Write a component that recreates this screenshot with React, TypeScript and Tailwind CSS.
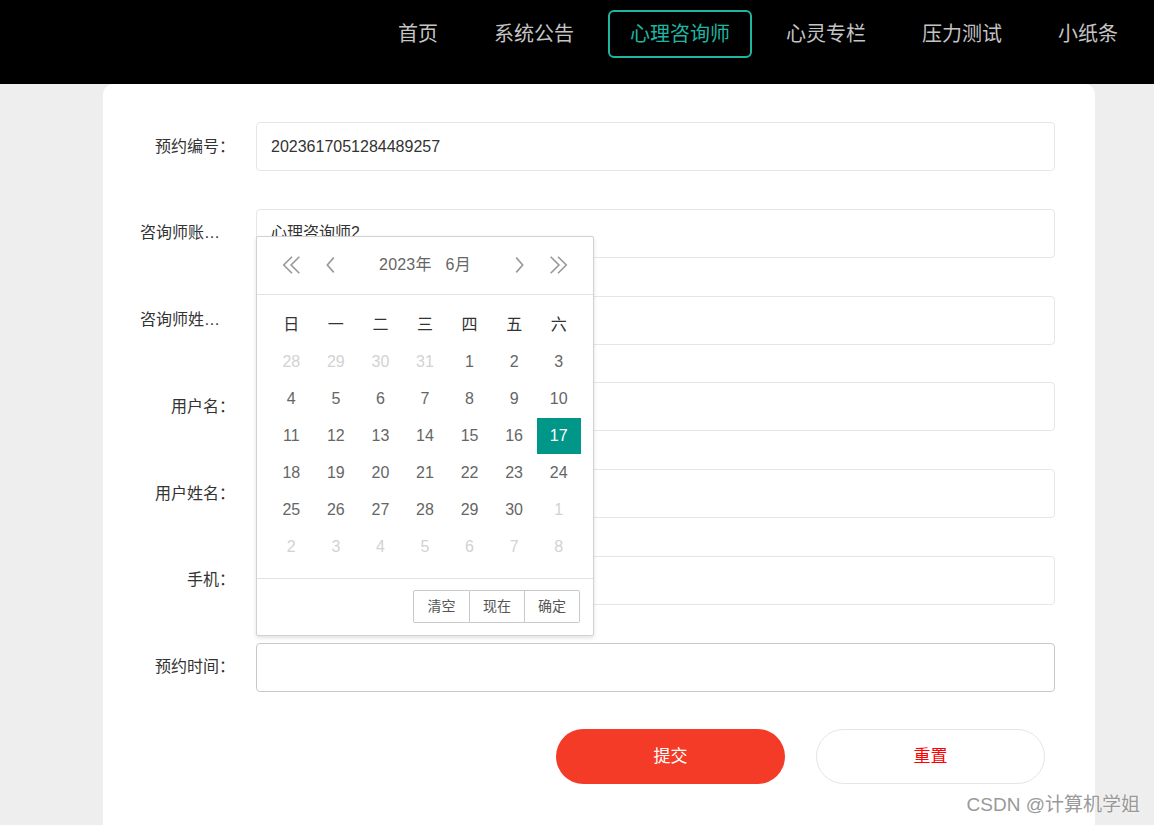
import React from 'react';

const font = { fontFamily: '"Liberation Sans", "Noto Sans CJK SC", sans-serif' };

const navItems = ['首页', '系统公告', '心理咨询师', '心灵专栏', '压力测试', '小纸条'];

const fields = [
  { label: '预约编号：', value: '2023617051284489257' },
  { label: '咨询师账号：', value: '心理咨询师2' },
  { label: '咨询师姓名：', value: '' },
  { label: '用户名：', value: '' },
  { label: '用户姓名：', value: '' },
  { label: '手机：', value: '' },
];

const weekDays = ['日', '一', '二', '三', '四', '五', '六'];

const days: { d: number; dim?: boolean }[] = [
  ...[28, 29, 30, 31].map((d) => ({ d, dim: true })),
  ...Array.from({ length: 30 }, (_, i) => ({ d: i + 1 })),
  ...[1, 2, 3, 4, 5, 6, 7, 8].map((d) => ({ d, dim: true })),
];

function Chevron({ double, dir }: { double?: boolean; dir: 'l' | 'r' }) {
  const flip = dir === 'r' ? 'scale(-1,1) translate(-24,0)' : undefined;
  return (
    <svg width={double ? 22 : 12} height="22" viewBox={double ? '0 0 24 24' : '0 0 12 24'} fill="none" stroke="#999" strokeWidth="1.8">
      {double ? (
        <g transform={flip}>
          <path d="M12 3 L3 12 L12 21" />
          <path d="M20 3 L11 12 L20 21" />
        </g>
      ) : (
        <g transform={dir === 'r' ? 'scale(-1,1) translate(-12,0)' : undefined}>
          <path d="M9 4 L2 12 L9 20" />
        </g>
      )}
    </svg>
  );
}

function DatePicker() {
  return (
    <div className="absolute left-0 bottom-full mb-[7px] w-[338px] bg-white border border-[#d2d2d2] shadow-[0_2px_4px_rgba(0,0,0,0.12)] rounded-[2px] z-10">
      <div className="h-[58px] border-b border-[#e2e2e2] flex items-center px-[24px] text-[#666] text-[16px]">
        <Chevron double dir="l" />
        <span className="ml-[22px]"><Chevron dir="l" /></span>
        <div className="flex-1 text-center tracking-[0.2px]">2023年&nbsp;&nbsp;&nbsp;6月</div>
        <span className="mr-[22px]"><Chevron dir="r" /></span>
        <Chevron double dir="r" />
      </div>
      <div className="px-[12px] pt-[12px] pb-[12px]">
        <div className="grid grid-cols-7">
          {weekDays.map((w) => (
            <div key={w} className="h-[37px] flex items-center justify-center text-[16px] text-[#333]">{w}</div>
          ))}
          {days.map((x, i) => {
            const sel = !x.dim && x.d === 17;
            return (
              <div key={i} className="h-[37px] flex items-center justify-center">
                <div
                  className={
                    'w-[44px] h-[36px] flex items-center justify-center text-[16px] ' +
                    (sel ? 'bg-[#009688] text-white' : x.dim ? 'text-[#d2d2d2]' : 'text-[#666]')
                  }
                >
                  {x.d}
                </div>
              </div>
            );
          })}
        </div>
      </div>
      <div className="h-[57px] border-t border-[#e2e2e2] flex items-center justify-end pr-[13px]">
        <div className="flex text-[14px] text-[#555]">
          <span className="w-[57px] h-[33px] flex items-center justify-center border border-[#c9c9c9] rounded-l-[2px]">清空</span>
          <span className="w-[55px] h-[33px] flex items-center justify-center border border-l-0 border-[#c9c9c9]">现在</span>
          <span className="w-[55px] h-[33px] flex items-center justify-center border border-l-0 border-[#c9c9c9] rounded-r-[2px]">确定</span>
        </div>
      </div>
    </div>
  );
}

export default function App() {
  return (
    <div className="min-h-screen bg-[#eeeeee] relative overflow-hidden" style={font}>
      <header className="h-[84px] bg-black flex justify-end items-start pt-[10px] pr-[14px]">
        <nav className="flex gap-[12px]">
          {navItems.map((n) => {
            const active = n === '心理咨询师';
            return (
              <div
                key={n}
                className={
                  'h-[48px] px-[20px] flex items-center text-[20px] border-2 rounded-[6px] ' +
                  (active ? 'border-[#1fb5a0] text-[#1fb5a0]' : 'border-transparent text-[#c4c4c4]')
                }
              >
                {n}
              </div>
            );
          })}
        </nav>
      </header>

      <div className="ml-[103px] w-[992px] bg-white rounded-t-[10px] pt-[38px] pl-[37px] pr-[40px] pb-[60px]">
        <div className="flex flex-col gap-[37.8px]">
          {fields.map((f) => (
            <div key={f.label} className="flex items-center">
              <label className="w-[95px] mr-[21px] text-right text-[16px] text-[#333] truncate">{f.label}</label>
              <div className="flex-1 h-[49px] border border-[#e6e6e6] rounded-[4px] flex items-center px-[14px] text-[16px] text-[#333]">
                {f.value}
              </div>
            </div>
          ))}
          <div className="flex items-center">
            <label className="w-[95px] mr-[21px] text-right text-[16px] text-[#333] truncate">预约时间：</label>
            <div className="flex-1 relative">
              <div className="h-[49px] border border-[#c9c9c9] rounded-[4px]" />
              <DatePicker />
            </div>
          </div>
        </div>
        <div className="flex mt-[37px] ml-[416px] gap-[31px]">
          <button className="w-[229px] h-[55px] rounded-full bg-[#f33b27] text-white text-[17px]">提交</button>
          <button className="w-[229px] h-[55px] rounded-full border border-[#e5e5e5] bg-white text-[#f00] text-[17px]">重置</button>
        </div>
      </div>

      <div className="absolute right-[14px] top-[791px] text-[19px] text-[#999] [text-shadow:0_0_2px_#fff]">CSDN @计算机学姐</div>
    </div>
  );
}
